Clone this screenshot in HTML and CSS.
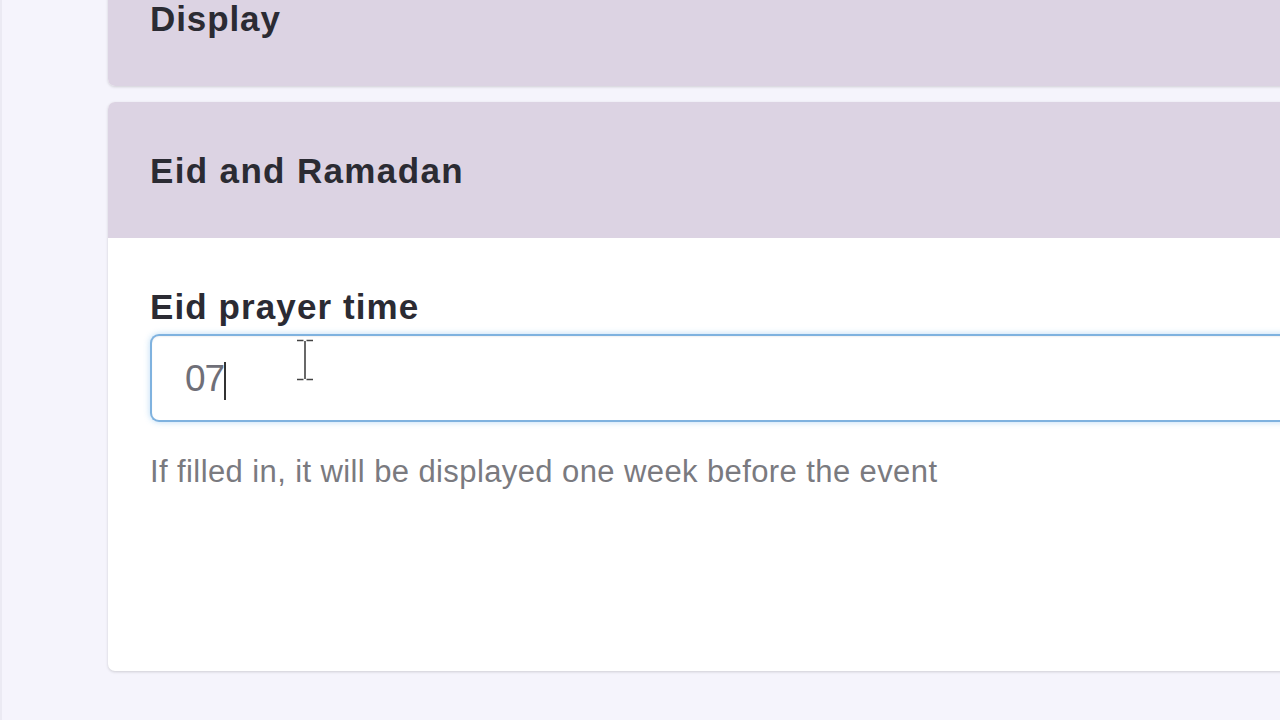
FILE: index.html
```html
<!DOCTYPE html>
<html lang="en">
<head>
<meta charset="utf-8">
<title>Settings</title>
<link rel="stylesheet" href="styles.css">
</head>
<body>
<main class="page">
  <section class="panel panel-collapsed">
    <header class="panel-heading"><h2 class="panel-title">Display</h2></header>
  </section>
  <section class="panel">
    <header class="panel-heading"><h2 class="panel-title">Eid and Ramadan</h2></header>
    <div class="panel-body">
      <label class="field-label">Eid prayer time</label>
      <div class="field">
        <span class="field-value">07</span><span class="caret"></span>
        <svg class="pointer" width="20" height="44" viewBox="0 0 20 44" aria-hidden="true">
          <path d="M2 2.5h6.5M11.5 2.5H18M10 3v38M2 41.5h6.5M11.5 41.5H18" stroke="#fff" stroke-width="3.5" fill="none"/>
          <path d="M2 2.5h6.5M11.5 2.5H18M10 3v38M2 41.5h6.5M11.5 41.5H18" stroke="#444" stroke-width="1.6" fill="none"/>
        </svg>
      </div>
      <p class="help">If filled in, it will be displayed one week before the event</p>
    </div>
  </section>
</main>
</body>
</html>
```

FILE: styles.css
```css
html, body {
  margin: 0;
  padding: 0;
}

body {
  background: #f5f4fc;
  font-family: "Liberation Sans", Arial, sans-serif;
  color: #333;
  height: 720px;
  overflow: hidden;
  border-left: 2px solid #ebeaf3;
  box-sizing: border-box;
}

.page {
  display: flex;
  flex-direction: column;
  gap: 16px;
  padding-left: 106px;
  margin-top: -50px;
  margin-right: -40px;
}

.panel {
  background: #fff;
  border-radius: 7px;
  box-shadow: 0 1px 3px rgba(0, 0, 0, 0.16);
  overflow: hidden;
}

.panel-heading {
  background: #dcd3e3;
  height: 136px;
  display: flex;
  align-items: center;
  padding-left: 42px;
  padding-top: 2px;
  box-sizing: border-box;
}

.panel-title {
  margin: 0;
  font-size: 35px;
  font-weight: 700;
  letter-spacing: 1.35px;
  color: #2b2b33;
}

.panel-collapsed .panel-title {
  letter-spacing: 0.9px;
}

.panel-body {
  padding: 49px 0 0 42px;
  height: 384px;
  display: flex;
  flex-direction: column;
}

.field-label {
  font-size: 35px;
  font-weight: 700;
  letter-spacing: 1.1px;
  line-height: 40px;
  color: #2b2b33;
}

.field {
  position: relative;
  margin-top: 7px;
  height: 88px;
  box-sizing: border-box;
  border: 2px solid #7fb2df;
  border-right: none;
  border-radius: 9px 0 0 9px;
  box-shadow: 0 0 6px rgba(102, 175, 233, 0.45), inset 0 1px 2px rgba(0, 0, 0, 0.06);
  background: #fff;
  display: flex;
  align-items: center;
  padding-left: 33px;
}

.field-value {
  font-size: 37px;
  color: #6f6f78;
  letter-spacing: -1px;
  padding-top: 2px;
}

.caret {
  display: inline-block;
  width: 2px;
  height: 38px;
  background: #333;
  margin-top: 6px;
}

.pointer {
  position: absolute;
  left: 143px;
  top: 2px;
}

.help {
  margin: 32px 0 0;
  font-size: 31px;
  line-height: 36px;
  letter-spacing: 0.4px;
  color: #7a7a7f;
}
```
